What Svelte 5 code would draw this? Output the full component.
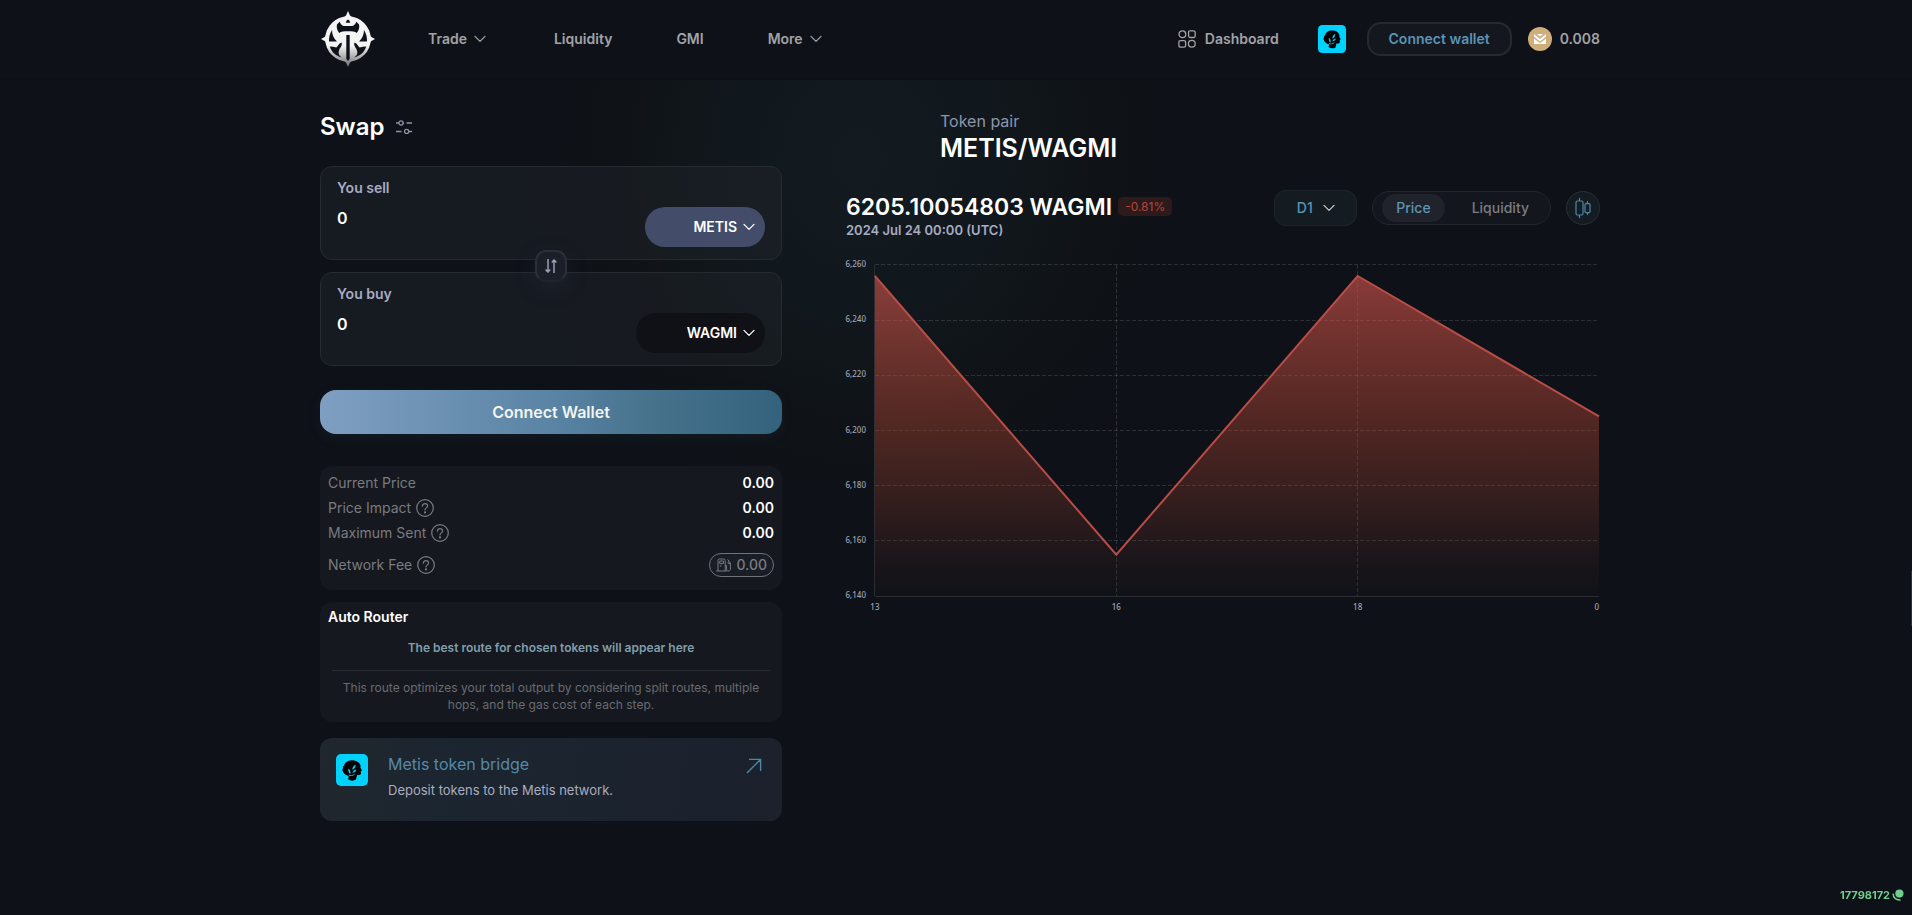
<script>
  const nav = [
    { label: 'Trade', menu: true },
    { label: 'Liquidity', menu: false },
    { label: 'GMI', menu: false },
    { label: 'More', menu: true }
  ];

  const details = [
    { label: 'Current Price', help: false },
    { label: 'Price Impact', help: true },
    { label: 'Maximum Sent', help: true },
    { label: 'Network Fee', help: true, fee: true }
  ];

  let sell = $state('0');
  let buy = $state('0');
  let view = $state('Price');

  // Chart geometry
  const left = 29;
  const right = 755;
  const top = 10;
  const bottom = 342;
  const ticks = [6260, 6240, 6220, 6200, 6180, 6160, 6140];
  const y = (v) => top + ((6260 - v) / 120) * (bottom - top);
  const points = [
    { label: '13', value: 6256 },
    { label: '16', value: 6155 },
    { label: '18', value: 6256 },
    { label: '0', value: 6205.1 }
  ].map((p, i) => ({ ...p, x: left + ((right - left) / 3) * i, y: y(p.value) }));
  const line = points.map((p) => `${p.x},${p.y}`).join(' ');
</script>

{#snippet chevron()}
  <svg class="chevron" width="12" height="8" viewBox="0 0 12 8" aria-hidden="true">
    <path d="M1 1.4 6 6.4 11 1.4" fill="none" stroke="currentColor" stroke-width="1.3" stroke-linecap="round" stroke-linejoin="round" />
  </svg>
{/snippet}

{#snippet metis(size)}
  <svg class="metis" width={size} height={size} viewBox="0 0 32 32" aria-hidden="true">
    <rect width="32" height="32" rx="5" fill="#00d2ff" />
    <path d="M12.2 25.5 12.6 22 C9 21 6.2 18.4 6.4 15 L7.2 14 6.8 12.6 8.2 11.6 C8.8 8.4 12 6.2 16 6.2 C20.4 6.2 24 8.4 24.6 12 L24.4 13.8 26 16.4 24.8 17.2 24.9 20 C24.4 21.4 22.6 21 21 21 L20 25.6 C17.6 27 14.6 27 12.2 25.5Z" fill="#000" />
    <path d="M12.4 14.6 C12 17 12.6 19 14.2 20.2 C15 18 14.2 15.8 12.4 14.6Z M19.6 10.4 C17.4 11.4 16.2 13.4 16.4 15.8 C18.6 14.8 19.8 12.8 19.6 10.4Z M20.4 15.4 C18.4 15.6 17 16.8 16.4 18.6 C18.4 18.8 20 17.4 20.4 15.4Z" fill="#00d2ff" />
    <path d="M12.6 21 C14.4 22 16.8 21.8 18.6 20.2" fill="none" stroke="#00d2ff" stroke-width="0.9" />
  </svg>
{/snippet}

{#snippet half()}
  <path d="M12 19C12 23.5 13.6 27.6 17 30.4H9C8.8 26.4 9.8 22.4 12 19Z" />
  <path d="M9.8 35.6C12 35.8 14 36 16.4 36.4C18.4 35 18.6 32.4 21.6 31.6C22.6 35 20 36.6 19.2 39C18.2 42 18.4 44 21.6 46.4C15.8 45 11.4 41 9.8 35.6Z" />
{/snippet}

<div class="page">
  <header>
    <div class="bar">
      <a class="logo" href="/" aria-label="Home">
        <svg width="56" height="56" viewBox="0 0 56 56" aria-hidden="true">
          <defs>
            <linearGradient id="steel" gradientUnits="userSpaceOnUse" x1="0" y1="0" x2="0" y2="56">
              <stop offset="0.62" stop-color="#f4f4f4" />
              <stop offset="1" stop-color="#6c6d71" />
            </linearGradient>
          </defs>
          <g fill="url(#steel)">
            <circle cx="28" cy="28" r="22.8" />
            <path d="M28 0 30 4.6 32.4 6.4H23.6L26 4.6Z" />
            <path d="M1 28 5 25.8 6.6 23.6V32.4L5 30.2Z" />
            <path d="M55 28 51 25.8 49.4 23.6V32.4L51 30.2Z" />
            <path d="M28 56 26 51.4 23.6 49.6H32.4L30 51.4Z" />
          </g>
          <g fill="#0e1118">
            <path d="M17 13.5 19.6 10.8C20.8 13.4 22 15 24.4 15H31.6C34 15 35.2 13.4 36.4 10.8L39 13.5C39.8 16.5 38.8 19.6 36.8 22C35 20.4 32 20.2 28 20.2S21 20.4 19.2 22C17.2 19.6 16.2 16.5 17 13.5Z" />
            <path d="M25.8 11.8 26.6 9.6 28 8.4 29.4 9.6 30.2 11.8Z" />
            <path d="M26.3 24H29.7V48L28 50 26.3 48Z" />
            {@render half()}
            <g transform="translate(56 0) scale(-1 1)">{@render half()}</g>
          </g>
        </svg>
      </a>
      <nav>
        {#each nav as item}
          <a href="/" class:menu={item.menu}>{item.label}{#if item.menu}{@render chevron()}{/if}</a>
        {/each}
      </nav>
      <a class="dashboard" href="/">
        <svg width="18" height="18" viewBox="0 0 18 18" fill="none" stroke="currentColor" stroke-width="1.3" aria-hidden="true">
          <circle cx="4.4" cy="4.2" r="3.4" />
          <path d="M10.6 2.2Q10.6 .8 12 .8H15.2Q17.2.8 17.2 2.6V6Q17.2 7.5 15.8 7.5H12Q10.6 7.5 10.6 6Z" />
          <path d="M.9 12Q.9 10.6 2.3 10.6H6Q7.6 10.6 7.6 12V15.8Q7.6 17.2 6 17.2H2.6Q.9 17.2.9 15.4Z" />
          <circle cx="13.8" cy="13.8" r="3.4" />
        </svg>
        Dashboard
      </a>
      <button class="network" aria-label="Network">{@render metis(28)}</button>
      <button class="wallet">Connect wallet</button>
      <div class="balance">
        <svg width="24" height="24" viewBox="0 0 24 24" aria-hidden="true">
          <circle cx="12" cy="12" r="12" fill="#cfae7c" />
          <path d="M6 7 12 12 18 7 18 9.6 12 14.4 6 9.6Z M8.8 7H15.2L12 9.6Z M6 11.6 12 16.2 18 11.6V17H6Z" fill="#fff" />
        </svg>
        0.008
      </div>
    </div>
  </header>

  <main>
    <section class="swap">
      <div class="title">
        <h1>Swap</h1>
        <button aria-label="Settings">
          <svg width="16" height="14" viewBox="0 0 16 14" fill="none" stroke="currentColor" stroke-width="1.3" aria-hidden="true">
            <path d="M0 3H3M7 3H8M10.5 3H16M0 11.5H5.5M8 11.5H8.6M12.6 11.5H16" />
            <circle cx="5" cy="3" r="2.1" /><circle cx="10.6" cy="11.5" r="2.1" />
          </svg>
        </button>
      </div>

      <div class="pair">
        <div class="box">
          <div class="amount">
            <label for="sell">You sell</label>
            <input id="sell" inputmode="decimal" bind:value={sell} />
          </div>
          <button class="token sold">METIS {@render chevron()}</button>
        </div>
        <button class="flip" aria-label="Switch tokens">
          <svg width="12" height="14" viewBox="0 0 12 14" fill="none" stroke="currentColor" stroke-width="1.5" aria-hidden="true">
            <path d="M3 0V13M.6 10.6 3 13 5.2 10.6M9 14V1M6.8 3.4 9 1 11.4 3.4" />
          </svg>
        </button>
        <div class="box">
          <div class="amount">
            <label for="buy">You buy</label>
            <input id="buy" inputmode="decimal" bind:value={buy} />
          </div>
          <button class="token bought">WAGMI {@render chevron()}</button>
        </div>
      </div>

      <button class="connect">Connect Wallet</button>

      <dl class="panel details">
        {#each details as row}
          <div class:last={row.fee}>
            <dt>
              {row.label}
              {#if row.help}
                <svg width="18" height="18" viewBox="0 0 18 18" fill="none" stroke="currentColor" stroke-width="1.2" aria-hidden="true">
                  <circle cx="9" cy="9" r="8.3" />
                  <path d="M6.4 7.2C6.4 5.6 7.5 4.6 9 4.6S11.6 5.6 11.6 7C11.6 8.8 9 9 9 11" stroke-linecap="round" />
                  <circle cx="9" cy="13.4" r=".5" fill="currentColor" />
                </svg>
              {/if}
            </dt>
            {#if row.fee}
              <dd class="fee">
                <svg width="16" height="14" viewBox="0 0 16 14" fill="none" stroke="currentColor" stroke-width="1" aria-hidden="true">
                  <path d="M2 13V2.6Q2 1 3.6 1H7.6Q9.2 1 9.2 2.6V13M.4 13H10.8M3.8 3H7.4V5.6H3.8ZM3.8 8H5.6M9.2 7.6H10.6V11.6Q10.8 13 12.4 13T14.4 11.6V5L11.6 1.4M12.2 3.4V5.6H14.4" />
                </svg>
                0.00
              </dd>
            {:else}
              <dd>0.00</dd>
            {/if}
          </div>
        {/each}
      </dl>

      <section class="panel router">
        <h2>Auto Router</h2>
        <p class="best">The best route for chosen tokens will appear here</p>
        <p class="note">This route optimizes your total output by considering split routes, multiple hops, and the gas cost of each step.</p>
      </section>

      <a class="bridge" href="/">
        {@render metis(32)}
        <span class="words">
          <strong>Metis token bridge</strong>
          <span>Deposit tokens to the Metis network.</span>
        </span>
        <svg width="16" height="16" viewBox="0 0 16 16" fill="none" stroke="#4b87a8" stroke-width="1.4" aria-hidden="true">
          <path d="M1 15 14.4 1.6M3 1.4H14.6V13" />
        </svg>
      </a>
    </section>

    <section class="market">
      <div class="name">
        <span>Token pair</span>
        <h2>METIS/WAGMI</h2>
      </div>
      <div class="head">
        <div class="quote">
          <div class="price"><strong>6205.10054803 WAGMI</strong><span>-0.81%</span></div>
          <time>2024 Jul 24 00:00 (UTC)</time>
        </div>
        <div class="tools">
          <button class="range">D1 {@render chevron()}</button>
          <div class="toggle">
            {#each ['Price', 'Liquidity'] as option}
              <button class:active={view === option} onclick={() => (view = option)}>{option}</button>
            {/each}
          </div>
          <button class="candles" aria-label="Candle chart">
            <svg width="16" height="20" viewBox="0 0 16 20" fill="none" stroke="currentColor" stroke-width="1.2" aria-hidden="true">
              <rect x="1" y="3" width="7" height="14" rx="1.4" />
              <rect x="10" y="5.6" width="5" height="9" rx="1" />
              <path d="M4.5 0V3M4.5 17V20M12.5 3V5.6M12.5 14.6V17" />
            </svg>
          </button>
        </div>
      </div>

      <svg class="chart" viewBox="0 0 756 360" role="img" aria-label="METIS/WAGMI price">
        <defs>
          <linearGradient id="fill" x1="0" y1="0" x2="0" y2="1">
            <stop offset="0" stop-color="#c8514a" stop-opacity="0.66" />
            <stop offset="0.5" stop-color="#bb4832" stop-opacity="0.36" />
            <stop offset="0.7" stop-color="#b84b32" stop-opacity="0.22" />
            <stop offset="0.84" stop-color="#b84b32" stop-opacity="0.11" />
            <stop offset="1" stop-color="#783c1e" stop-opacity="0.02" />
          </linearGradient>
        </defs>
        <g class="grid">
          {#each ticks.slice(0, -1) as t}<line x1={left} x2={right} y1={y(t)} y2={y(t)} />{/each}
          {#each points.slice(1, 3) as p}<line x1={p.x} x2={p.x} y1={top} y2={bottom} />{/each}
        </g>
        <path class="axis" d="M{left} {top}V{bottom}H{right}" />
        <polygon points="{left},{bottom} {line} {right},{bottom}" fill="url(#fill)" />
        <polyline points={line} fill="none" stroke="#b94d46" stroke-width="2" />
        {#each ticks as t}<text x="20" y={y(t) + 2} text-anchor="end">{t.toLocaleString('en-US')}</text>{/each}
        {#each points as p, i}
          <text x={p.x} y="356" text-anchor={i === 3 ? 'end' : 'middle'}>{p.label}</text>
        {/each}
      </svg>
    </section>
  </main>

  <a class="block" href="/">
    17798172
    <svg width="12" height="12" viewBox="0 0 12 12" aria-hidden="true">
      <circle cx="7.4" cy="4.6" r="4.1" fill="#6fcf8c" />
      <path d="M1.2 4.6C1 8.6 4 11.4 8.6 10.9" fill="none" stroke="#6fcf8c" stroke-width="1.5" />
    </svg>
  </a>
  <span class="thumb"></span>
</div>

<style>
  :global(body) {
    margin: 0;
    background: #0e1118;
  }
  .page {
    min-height: 100vh;
    box-sizing: border-box;
    font-family: Inter, 'Noto Sans', sans-serif;
    font-size: 14px;
    line-height: 20px;
    color: #fff;
    background: radial-gradient(340px 380px at 860px 160px, #131b21 0, #11181d 35%, #0f1317 70%, #0e1118 100%);
  }
  button,
  input {
    font: inherit;
    color: inherit;
    background: none;
    border: 0;
    padding: 0;
    margin: 0;
  }
  button {
    cursor: pointer;
  }
  a {
    color: inherit;
    text-decoration: none;
  }
  h1,
  h2,
  p,
  dl,
  dd {
    margin: 0;
  }
  svg {
    display: block;
    flex: none;
  }
  header,
  main {
    padding-left: 8px;
  }
  .bar,
  main {
    max-width: 1280px;
    margin: 0 auto;
  }
  header {
    background: #0e1117;
    border-bottom: 1px solid #0c0f13;
  }
  .bar {
    display: flex;
    align-items: center;
    height: 77px;
    padding-bottom: 2px;
    color: #a2a3a6;
    font-weight: 600;
  }
  nav {
    display: flex;
    gap: 64px;
    margin-left: 52px;
    margin-right: auto;
  }
  nav a,
  .dashboard,
  .balance {
    display: flex;
    align-items: center;
  }
  nav a {
    gap: 7px;
  }
  nav .menu {
    margin-right: 4px;
  }
  .dashboard {
    gap: 9px;
    margin-right: 39px;
  }
  .wallet {
    width: 145px;
    height: 34px;
    margin: 0 16px 0 21px;
    border: 2px solid #262930;
    border-radius: 14px;
    background: #14171e;
    color: #5b93b5;
  }
  .balance {
    gap: 8px;
  }

  main {
    display: grid;
    grid-template-columns: 462fr 754fr;
    gap: 64px;
    padding-top: 31px;
    padding-bottom: 80px;
  }
  .title {
    display: flex;
    align-items: center;
    gap: 12px;
    height: 32px;
    margin-bottom: 23px;
  }
  .title button {
    color: #8d91a8;
  }
  h1,
  .name h2,
  .price strong {
    font-size: 24px;
    line-height: 28px;
    font-weight: 600;
  }
  .pair {
    position: relative;
    display: grid;
    gap: 12px;
  }
  .box {
    display: flex;
    justify-content: space-between;
    align-items: flex-end;
    box-sizing: border-box;
    height: 94px;
    padding: 11px 16px 12px 16px;
    border: 1px solid #272b31;
    border-radius: 12px;
    background: rgba(34, 37, 44, 0.45);
  }
  .amount {
    display: flex;
    flex-direction: column;
    align-self: flex-start;
    gap: 9px;
    min-width: 0;
  }
  .amount label {
    color: #a7abc3;
    font-weight: 600;
  }
  .amount input {
    width: 100%;
    height: 22px;
    font-size: 16px;
    font-weight: 600;
    outline: 0;
  }
  .token {
    display: flex;
    align-items: center;
    justify-content: flex-end;
    gap: 6px;
    height: 40px;
    padding-right: 10px;
    border-radius: 20px;
    font-weight: 600;
  }
  .sold {
    width: 120px;
    background: #434d69;
  }
  .bought {
    width: 129px;
    background: #0f1116;
  }
  .flip {
    position: absolute;
    top: calc(50% - 16px);
    left: calc(50% - 16px);
    display: grid;
    place-items: center;
    width: 32px;
    height: 32px;
    border: 2px solid #2b2f39;
    border-bottom-color: #20242d;
    border-radius: 11px;
    background: #1b1f28;
    color: #9a9fb2;
    box-shadow: 0 6px 20px rgba(50, 55, 70, 0.3);
  }
  .connect {
    display: block;
    width: 100%;
    height: 44px;
    margin: 24px 0 32px;
    border-radius: 16px;
    background: linear-gradient(90deg, #7f9fc2, #5a84a4 50%, #46728c 72%, #34617c);
    color: #f4f4f0;
    font-size: 16px;
    font-weight: 600;
    box-shadow: 0 4px 12px rgba(40, 60, 75, 0.2);
  }
  .panel {
    box-sizing: border-box;
    border-radius: 12px;
    background: #15181f;
  }
  .details {
    height: 124px;
    padding: 4px 8px;
    margin-bottom: 12px;
  }
  .details > div {
    display: flex;
    justify-content: space-between;
    align-items: center;
    height: 25px;
  }
  .details > .last {
    height: 40px;
  }
  dt {
    display: flex;
    align-items: center;
    gap: 5px;
    color: #797b80;
  }
  dd {
    font-weight: 600;
  }
  .fee {
    display: flex;
    align-items: center;
    gap: 4px;
    height: 22px;
    padding: 0 6px;
    border: 1px solid #70737a;
    border-radius: 12px;
    background: #191d25;
    color: #797b80;
    font-weight: 500;
  }
  .router {
    min-height: 120px;
    padding: 5px 8px;
    margin-bottom: 16px;
    font-size: 12px;
    text-align: center;
  }
  .router h2 {
    font-size: 14px;
    line-height: 20px;
    font-weight: 600;
    text-align: left;
  }
  .best {
    padding: 11px 0 12px;
    margin: 0 4px;
    border-bottom: 1px solid #282c32;
    color: #809eab;
    font-weight: 600;
  }
  .note {
    padding-top: 8px;
    line-height: 17px;
    color: #696b70;
  }
  .bridge {
    display: flex;
    align-items: flex-start;
    box-sizing: border-box;
    min-height: 83px;
    padding: 16px 20px 16px 16px;
    border-radius: 12px;
    background: linear-gradient(100deg, #20272e, #1b2530 30%, #1c212c);
  }
  .bridge > svg:last-child {
    margin-top: 4px;
  }
  .words {
    display: flex;
    flex-direction: column;
    flex: 1;
    gap: 6px;
    margin-left: 20px;
    font-size: 13px;
    color: #a9adbf;
  }
  .words strong {
    color: #5489a9;
    font-size: 16px;
    font-weight: 400;
  }

  .name {
    padding-left: 94px;
    margin-bottom: 31px;
  }
  .name span {
    display: block;
    color: #8f93a8;
    font-size: 16px;
  }
  .name h2 {
    margin-top: 3px;
    font-size: 25px;
  }
  .head {
    display: flex;
    justify-content: space-between;
    margin-bottom: 15px;
  }
  .price {
    display: flex;
    align-items: center;
    gap: 6px;
    height: 27px;
  }
  .price strong {
    font-size: 23px;
  }
  .price span {
    padding: 0 7px;
    border-radius: 5px;
    background: #2d1a1a;
    color: #b5463f;
    font-size: 12px;
    line-height: 19px;
  }
  time {
    display: block;
    color: #a7abc3;
    font-size: 13px;
    font-weight: 600;
  }
  .tools {
    display: flex;
    align-items: center;
    gap: 15px;
    height: 30px;
    font-weight: 500;
  }
  .range {
    display: flex;
    align-items: center;
    justify-content: center;
    gap: 10px;
    width: 83px;
    height: 36px;
    border: 1px solid #1d252c;
    border-radius: 12px;
    background: #141c22;
    color: #5b93b5;
  }
  .range .chevron {
    color: #c3c6d6;
  }
  .toggle {
    display: flex;
    align-items: center;
    box-sizing: border-box;
    height: 34px;
    padding: 0 10px 0 9px;
    border: 1px solid #23262d;
    border-radius: 17px;
    background: #13161d;
    color: #7b7d83;
  }
  .toggle button {
    height: 28px;
    padding: 0 14px;
    border-radius: 14px;
  }
  .toggle button:last-child {
    padding: 0 11px 0 27px;
  }
  .toggle .active {
    background: #20232b;
    color: #5b93b5;
  }
  .candles {
    display: grid;
    place-items: center;
    width: 34px;
    height: 34px;
    border: 1px solid #263038;
    border-radius: 17px;
    background: #141c22;
    color: #4b87a8;
  }
  .chart {
    width: 100%;
    height: auto;
    overflow: visible;
  }
  .grid line {
    stroke: #fff;
    stroke-opacity: 0.13;
    stroke-dasharray: 4 2;
    shape-rendering: crispEdges;
  }
  .axis {
    fill: none;
    stroke: #2b2d32;
    shape-rendering: crispEdges;
  }
  .chart text {
    fill: #a0a3af;
    font-family: 'Noto Sans', sans-serif;
    font-size: 8px;
    font-weight: 500;
  }
  .block {
    position: fixed;
    right: 8px;
    bottom: 10px;
    display: flex;
    align-items: center;
    gap: 2px;
    color: #6fcf8c;
    font-size: 11px;
    font-weight: 700;
  }
  .thumb {
    position: fixed;
    right: 0;
    top: 571px;
    width: 1px;
    height: 55px;
    background: #2b323c;
  }
</style>
